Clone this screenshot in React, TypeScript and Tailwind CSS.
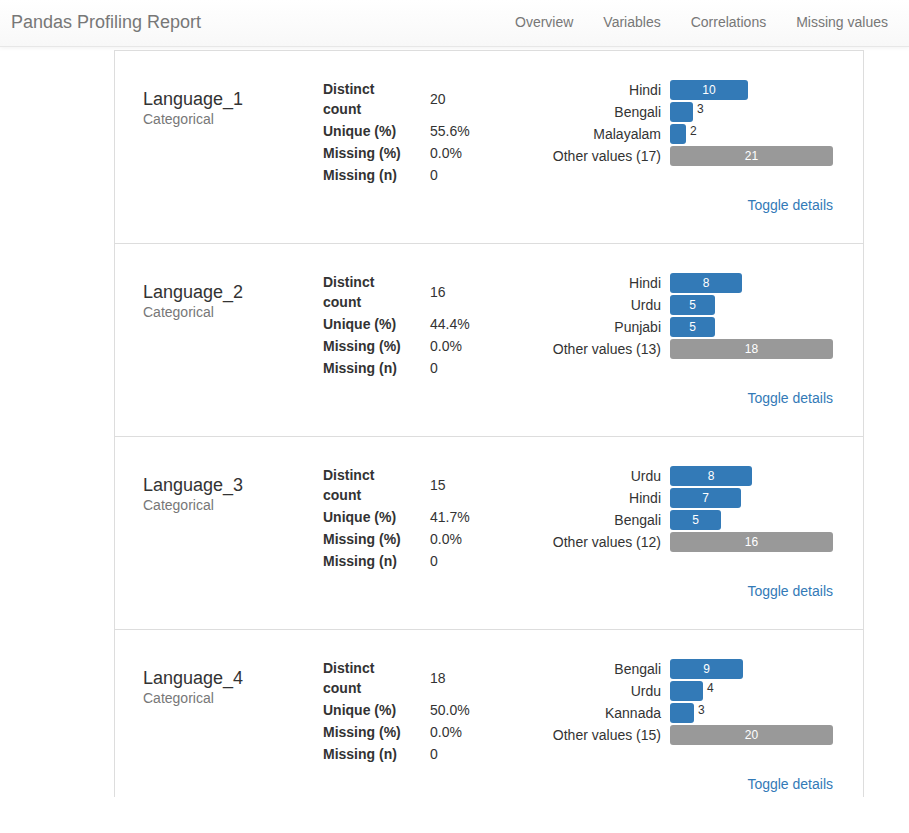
import React from "react";

interface IBar {
  label: string;
  value: number;
  other?: boolean;
}

interface IVariable {
  name: string;
  distinct: number;
  unique: string;
  missingPct: string;
  missingN: number;
  bars: IBar[];
}

const variables: IVariable[] = [
  {
    name: "Language_1",
    distinct: 20,
    unique: "55.6%",
    missingPct: "0.0%",
    missingN: 0,
    bars: [
      { label: "Hindi", value: 10 },
      { label: "Bengali", value: 3 },
      { label: "Malayalam", value: 2 },
      { label: "Other values (17)", value: 21, other: true },
    ],
  },
  {
    name: "Language_2",
    distinct: 16,
    unique: "44.4%",
    missingPct: "0.0%",
    missingN: 0,
    bars: [
      { label: "Hindi", value: 8 },
      { label: "Urdu", value: 5 },
      { label: "Punjabi", value: 5 },
      { label: "Other values (13)", value: 18, other: true },
    ],
  },
  {
    name: "Language_3",
    distinct: 15,
    unique: "41.7%",
    missingPct: "0.0%",
    missingN: 0,
    bars: [
      { label: "Urdu", value: 8 },
      { label: "Hindi", value: 7 },
      { label: "Bengali", value: 5 },
      { label: "Other values (12)", value: 16, other: true },
    ],
  },
  {
    name: "Language_4",
    distinct: 18,
    unique: "50.0%",
    missingPct: "0.0%",
    missingN: 0,
    bars: [
      { label: "Bengali", value: 9 },
      { label: "Urdu", value: 4 },
      { label: "Kannada", value: 3 },
      { label: "Other values (15)", value: 20, other: true },
    ],
  },
];

const BAR_MAX = 163;

function FreqChart({ bars }: { bars: IBar[] }) {
  const max = Math.max(...bars.map((b) => b.value));
  return (
    <div className="flex flex-col gap-[2px]">
      {bars.map((bar, i) => {
        const width = Math.round((bar.value / max) * BAR_MAX);
        const inside = width > 40;
        return (
          <div key={i} className="flex items-center justify-end h-[20px]">
            <span className="text-[14px] text-[#333] leading-[20px] whitespace-nowrap">
              {bar.label}
            </span>
            <div className="w-[163px] ml-[9px] h-[20px] flex items-start">
              <div
                className={`h-[20px] rounded-[3px] flex items-center justify-center text-[12px] text-white ${
                  bar.other ? "bg-[#999]" : "bg-[#337ab7]"
                }`}
                style={{ width }}>
                {inside ? bar.value : null}
              </div>
              {!inside && (
                <span className="ml-[4px] text-[12px] leading-[14px] text-[#333]">
                  {bar.value}
                </span>
              )}
            </div>
          </div>
        );
      })}
    </div>
  );
}

function VariableRow({ v, last }: { v: IVariable; last: boolean }) {
  const stats: [string, React.ReactNode][] = [
    ["Unique (%)", v.unique],
    ["Missing (%)", v.missingPct],
    ["Missing (n)", v.missingN],
  ];
  return (
    <div
      className={`flex pl-[28px] pr-[30px] pt-[28px] ${
        last ? "h-[167px]" : "h-[193px] border-b border-[#ddd]"
      }`}>
      <div className="w-[180px] pt-[10px]">
        <div className="text-[18px] leading-[20px] text-[#333]">{v.name}</div>
        <div className="text-[14px] leading-[20px] text-[#777]">
          Categorical
        </div>
      </div>
      <div className="w-[200px] text-[14px] text-[#333] -mt-[1px]">
        <div className="flex items-center py-[1px]">
          <span className="w-[107px] font-bold leading-[20px]">
            Distinct
            <br />
            count
          </span>
          <span>{v.distinct}</span>
        </div>
        {stats.map(([k, val]) => (
          <div key={k} className="flex items-center py-[1px] leading-[20px]">
            <span className="w-[107px] font-bold">{k}</span>
            <span>{val}</span>
          </div>
        ))}
      </div>
      <div className="flex-1 flex flex-col items-end pt-[1px]">
        <FreqChart bars={v.bars} />
        <a className="mt-[29px] text-[14px] leading-[20px] text-[#337ab7] cursor-pointer">
          Toggle details
        </a>
      </div>
    </div>
  );
}

export default function App() {
  return (
    <div className="min-h-screen bg-white font-['Liberation_Sans',Arial,sans-serif]">
      <nav className="h-[47px] flex items-center justify-between border-b border-[#e7e7e7] bg-gradient-to-b from-white to-[#f8f8f8] shadow-[0_1px_4px_rgba(0,0,0,0.06)]">
        <span className="pl-[11px] text-[18px] text-[#777] -mt-[2px]">
          Pandas Profiling Report
        </span>
        <div className="flex pr-[6px] text-[14px] text-[#777] -mt-[2px]">
          {["Overview", "Variables", "Correlations", "Missing values"].map(
            (item) => (
              <a key={item} className="px-[15px] cursor-pointer">
                {item}
              </a>
            )
          )}
        </div>
      </nav>
      <div className="ml-[114px] mt-[3px] w-[750px] border-x border-t border-[#ddd]">
        {variables.map((v, i) => (
          <VariableRow key={v.name} v={v} last={i === variables.length - 1} />
        ))}
      </div>
    </div>
  );
}
